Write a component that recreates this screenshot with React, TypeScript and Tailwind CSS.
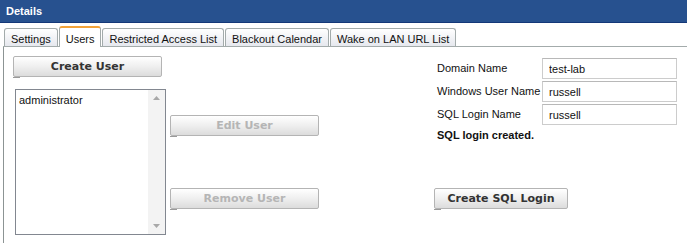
import React from 'react';

const tabs = ['Settings', 'Users', 'Restricted Access List', 'Blackout Calendar', 'Wake on LAN URL List'];

const Btn: React.FC<{ label: string; w: string; disabled?: boolean }> = ({ label, w, disabled }) => (
    <div className={`relative ${w}`}>
        <button
            className={`w-full h-[21px] border border-[#b4b4b4] rounded-[2px] bg-gradient-to-b from-[#ffffff] via-[#efefef] to-[#dcdcdc] font-['DejaVu_Sans',Verdana,sans-serif] font-bold text-[11px] leading-none ${disabled ? 'text-[#b5b5b5]' : 'text-[#333333]'}`}
        >
            {label}
        </button>
        <span className="absolute left-0 -bottom-[1px] w-[7px] h-[1px] bg-[#9a9a9a]" />
    </div>
);

const Field: React.FC<{ label: string; value: string }> = ({ label, value }) => (
    <div className="flex items-center h-[21px]">
        <span className="w-[108px] pl-[3px] whitespace-nowrap text-[#111]">{label}</span>
        <input
            readOnly
            value={value}
            className="w-[135px] h-[21px] border border-[#cccccc] border-t-[#b8b8b8] px-[6px] text-[11px] text-[#111] outline-none"
        />
    </div>
);

const App: React.FC = () => {
    return (
        <div className="w-[687px] h-[244px] bg-white overflow-hidden font-['Liberation_Sans',Arial,sans-serif] text-[11px] text-black">
            <div className="h-[23px] bg-[#27518f] border-b border-[#143878] text-white font-bold text-[11px] pl-[6px] flex items-center">
                Details
            </div>

            <div className="ml-[3px] mt-[4px] h-[20px] flex items-end gap-[1px] pl-[1px] border-b border-[#a3abab]">
                {tabs.map((t) =>
                    t === 'Users' ? (
                        <div
                            key={t}
                            className="h-[21px] -mb-px px-[6px] pt-[3px] bg-white border border-b-0 border-[#a3abab] border-t-2 border-t-[#f2a33a] rounded-t-[3px] text-[#111]"
                        >
                            {t}
                        </div>
                    ) : (
                        <div
                            key={t}
                            className="h-[18px] px-[6px] pt-[2px] bg-gradient-to-b from-[#ffffff] to-[#e6e8ee] border border-b-0 border-[#a3abab] rounded-t-[3px] text-[#111]"
                        >
                            {t}
                        </div>
                    )
                )}
            </div>

            <div className="ml-[3px] h-[196px] border-l border-[#8c9494] flex">
                <div className="w-[162px] pl-[9px] pt-[9px]">
                    <Btn label="Create User" w="w-[149px]" />
                    <div className="mt-[12px] ml-[2px] w-[151px] h-[146px] border border-[#828790] flex">
                        <div className="flex-1 px-[3px] pt-[2px] text-[#111]">administrator</div>
                        <div className="w-[17px] bg-[#f3f3f3] flex flex-col justify-between items-center py-[6px]">
                            <svg width="7" height="4" viewBox="0 0 7 4">
                                <path d="M0 4 L3.5 0 L7 4 Z" fill="#a8a8a8" />
                            </svg>
                            <svg width="7" height="4" viewBox="0 0 7 4">
                                <path d="M0 0 L3.5 4 L7 0 Z" fill="#a8a8a8" />
                            </svg>
                        </div>
                    </div>
                </div>

                <div className="pl-[4px] pt-[68px] flex flex-col">
                    <Btn label="Edit User" w="w-[149px]" disabled />
                    <div className="mt-[52px]">
                        <Btn label="Remove User" w="w-[149px]" disabled />
                    </div>
                </div>

                <div className="ml-[115px] pt-[11px] flex flex-col">
                    <div className="flex flex-col gap-[2px]">
                        <Field label="Domain Name" value="test-lab" />
                        <Field label="Windows User Name" value="russell" />
                        <Field label="SQL Login Name" value="russell" />
                    </div>
                    <div className="mt-[3px] pl-[3px] leading-[14px] font-bold text-[#111]">SQL login created.</div>
                    <div className="mt-[46px]">
                        <Btn label="Create SQL Login" w="w-[134px]" />
                    </div>
                </div>
            </div>
        </div>
    );
};

export default App;
